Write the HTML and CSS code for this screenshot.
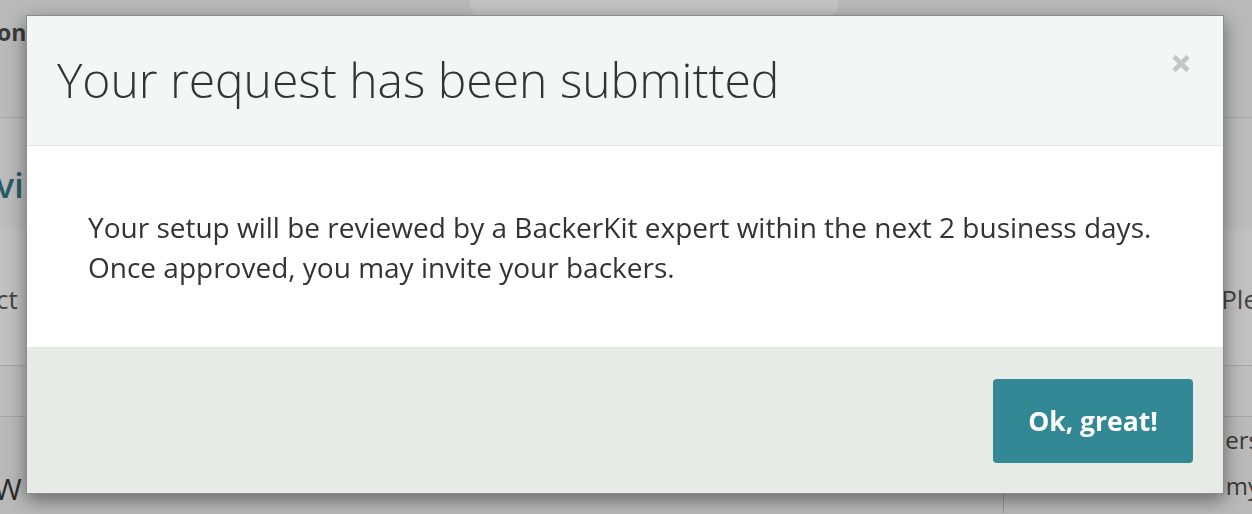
FILE: index.html
```html
<!DOCTYPE html>
<html lang="en">
  <head>
    <meta charset="UTF-8" />
    <title>Request submitted</title>
    <link rel="stylesheet" href="styles.css">
  </head>
  <body>
    <div class="page">
      <div class="topbar">
        <span class="tab"></span>
      </div>
      <div class="band band-nav">
        <span class="nav-label">on</span>
      </div>
      <div class="band band-title">
        <h2 class="page-title">vi</h2>
      </div>
      <div class="band band-panel">
        <span class="panel-left">ct</span>
        <span class="panel-right">Ple</span>
      </div>
      <div class="band band-row"></div>
      <div class="columns">
        <div class="col-main">
          <span class="big-letter">W</span>
        </div>
        <div class="col-side">
          <span>ers</span>
          <span>my</span>
        </div>
      </div>
    </div>

    <div class="modal">
      <div class="modal-content">
        <div class="modal-header">
          <h3>Your request has been submitted</h3>
          <button class="close" aria-label="Close">
            <svg width="20" height="19" viewBox="0 0 20 19">
              <path d="M3 2.5 L17 16.5 M17 2.5 L3 16.5" stroke="#c6c6c6" stroke-width="4.6" fill="none" />
            </svg>
          </button>
        </div>
        <div class="modal-body">
          <p>Your setup will be reviewed by a BackerKit expert within the next 2 business days.<br>Once approved, you may invite your backers.</p>
        </div>
        <div class="modal-footer">
          <button class="btn-primary">Ok, great!</button>
        </div>
      </div>
    </div>
  </body>
</html>
```

FILE: styles.css
```css
body {
  margin: 0;
  font-family: 'Open Sans', sans-serif;
  background: #bababa;
  overflow: hidden;
  height: 514px;
}

.page {
  color: #3a3a3a;
}

.topbar {
  height: 16px;
  display: flex;
  padding-left: 470px;
}

.tab {
  width: 368px;
  height: 16px;
  background: #c3c3c3;
  border-radius: 0 0 10px 10px;
}

.band {
  display: flex;
  align-items: center;
  justify-content: space-between;
  border-bottom: 1px solid #a6a6a6;
}

.band-nav {
  height: 101px;
  align-items: flex-start;
}

.nav-label {
  font-weight: 700;
  font-size: 23px;
  margin-top: 0;
  margin-left: -3px;
}

.band-title {
  height: 111px;
  background: #bcbcbc;
  border-bottom: none;
  align-items: flex-start;
}

.page-title {
  margin: 44px 0 0 -4px;
  font-size: 34px;
  font-weight: 600;
  color: #2a5b66;
}

.band-panel {
  height: 136px;
  background: #c1c1c1;
  font-size: 26px;
  color: #454545;
}

.panel-left {
  margin-left: -4px;
  margin-top: 4px;
}

.panel-right {
  margin-right: -6px;
  margin-top: 4px;
}

.band-row {
  height: 50px;
  background: #bdbdbd;
}

.columns {
  display: flex;
  height: 96px;
  background: #bababa;
}

.col-main {
  width: 1003px;
  border-right: 1px solid #9a9a9a;
  display: flex;
  align-items: flex-end;
}

.big-letter {
  font-size: 30px;
  color: #2c2c2c;
  margin-left: -6px;
  margin-bottom: 4px;
}

.col-side {
  flex: 1;
  display: flex;
  flex-direction: column;
  align-items: flex-end;
  font-size: 24px;
  color: #3a3a3a;
  line-height: 46px;
  margin-right: -8px;
}

.modal {
  position: fixed;
  left: 26px;
  top: 15px;
  width: 1198px;
}

.modal-content {
  background: #fff;
  border: 1px solid #8c8c8c;
  box-shadow: 0 6px 18px rgba(0, 0, 0, 0.45);
}

.modal-header {
  height: 130px;
  background: #f4f6f5;
  border-bottom: 1px solid #e3e5e3;
  display: flex;
  align-items: flex-start;
  justify-content: space-between;
  box-sizing: border-box;
  padding: 0 32px 0 30px;
}

.modal-header h3 {
  margin: 33px 0 0;
  font-size: 48px;
  font-weight: 300;
  color: #333;
  line-height: 1.3;
}

.close {
  border: none;
  background: none;
  padding: 0;
  margin-top: 38px;
  height: 19px;
  cursor: pointer;
}

.modal-body {
  padding: 61px 30px 59px 61px;
  height: 202px;
  box-sizing: border-box;
  border-bottom: 1px solid #e2e6e1;
}

.modal-body p {
  margin: 0;
  font-size: 28px;
  line-height: 40px;
  color: #333;
}

.modal-footer {
  background: #e7ebe6;
  height: 145px;
  box-sizing: border-box;
  padding: 31px 30px 30px;
  display: flex;
  justify-content: flex-end;
}

.btn-primary {
  width: 200px;
  height: 84px;
  border: none;
  border-radius: 4px;
  background: #338896;
  color: #fff;
  font-family: 'Open Sans', sans-serif;
  font-size: 26.5px;
  font-weight: 700;
  cursor: pointer;
}
```
